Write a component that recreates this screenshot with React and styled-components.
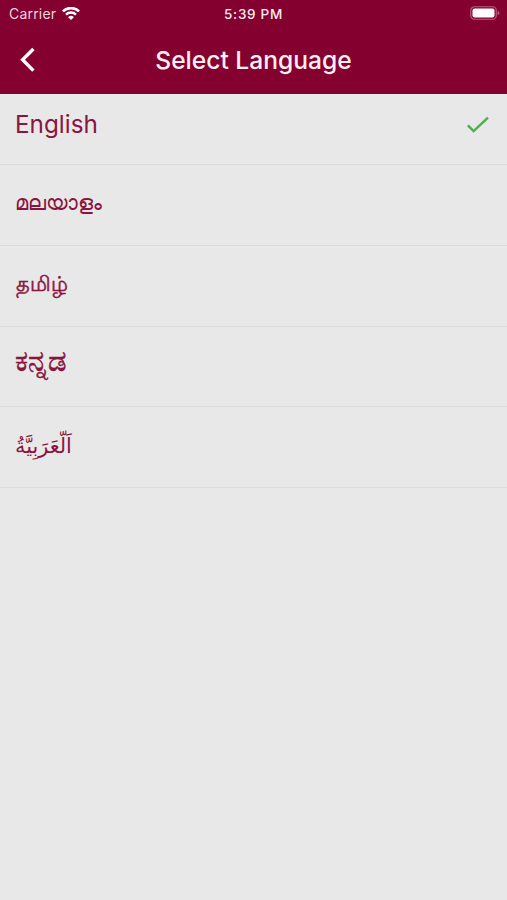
import styled, { createGlobalStyle } from "styled-components";

const GlobalStyle = createGlobalStyle`
  * {
    box-sizing: border-box;
  }
  body {
    margin: 0;
    background-color: #e8e8e8;
    font-family: Inter, "Noto Sans", sans-serif;
  }
`;

const Page = styled.div`
  width: 100%;
  min-height: 100vh;
`;

const Header = styled.header`
  background-color: #84002e;
  color: #fff;
  height: 94px;
`;

const StatusBar = styled.div`
  display: grid;
  grid-template-columns: 1fr auto 1fr;
  align-items: center;
  height: 27px;
  padding: 0 7px 0 9px;
  font-size: 14px;
`;

const Carrier = styled.div`
  display: flex;
  align-items: center;
  gap: 6px;
  color: #f0d5df;
  letter-spacing: 0.2px;
`;

const Time = styled.span`
  margin-right: 2px;
  font-size: 13.5px;
  font-weight: 500;
  letter-spacing: 0.7px;
  color: #fbeaf0;
`;

const Battery = styled.div`
  display: flex;
  justify-content: flex-end;
  margin-top: -1px;
`;

const TitleBar = styled.div`
  display: grid;
  grid-template-columns: 56px 1fr 56px;
  align-items: center;
  height: 65px;
`;

const BackButton = styled.button`
  display: flex;
  padding: 0 0 0 19px;
  border: none;
  background: none;
  color: #fff;
  cursor: pointer;
`;

const Title = styled.h1`
  margin: 0;
  font-size: 24.6px;
  font-weight: 500;
  text-align: center;
  color: #fdeef3;
`;

const List = styled.ul`
  list-style: none;
  margin: 0;
  padding: 0;
`;

const Row = styled.li`
  display: flex;
  align-items: center;
  justify-content: space-between;
  height: ${({ $height }) => $height || "80.75px"};
  padding: 0 17px ${({ $bottom }) => $bottom || "9px"}
    ${({ $left }) => $left || "15px"};
  border-bottom: 1px solid #dcdcdc;
  color: #8a1540;
`;

const Language = styled.span`
  font-family: ${({ $font }) => $font || "inherit"};
  font-size: ${({ $size }) => $size || "24.3px"};
  line-height: 1;
  -webkit-text-stroke: ${({ $stroke }) => $stroke || "0"} currentColor;
`;

const languages = [
  { code: "en", name: "English", height: "71px" },
  { code: "ml", name: "മലയാളം", size: "21.2px", bottom: "4px" },
  {
    code: "ta",
    name: "தமிழ்",
    size: "21.3px",
    bottom: "4px",
    left: "16px",
    stroke: "0.5px",
  },
  {
    code: "kn",
    name: "ಕನ್ನಡ",
    size: "29px",
    bottom: "12px",
    stroke: "0.5px",
  },
  {
    code: "ar",
    name: "اَلّعَرَبِيَّةُ",
    size: "20.8px",
    bottom: "2px",
    font: '"DejaVu Sans", sans-serif',
  },
];

function WifiIcon() {
  return (
    <svg width="18" height="14" viewBox="0 0 18 14" fill="none">
      <path d="M0.9 4.4a11.5 11.5 0 0 1 16.2 0" stroke="#fff" strokeWidth="2.7" />
      <path d="M4 7.6a7.1 7.1 0 0 1 10 0" stroke="#fff" strokeWidth="2.4" />
      <path d="M6.1 10.2a4.1 4.1 0 0 1 5.8 0L9 13.1z" fill="#fff" />
    </svg>
  );
}

function BatteryIcon() {
  return (
    <svg width="30" height="14" viewBox="0 0 30 14" fill="none">
      <rect x="0.75" y="0.75" width="25.5" height="12.5" rx="3.6" stroke="#b65f82" strokeWidth="1.2" />
      <rect x="2.5" y="2.5" width="22" height="9" rx="2" fill="#fff" />
      <path d="M27.6 4.8q2 .7 2 2.2t-2 2.2z" fill="#b65f82" />
    </svg>
  );
}

function BackIcon() {
  return (
    <svg width="17" height="26" viewBox="0 0 17 26" fill="none">
      <path d="M14.4 2 3.6 12.8l10.8 10.8" stroke="#fff" strokeWidth="3.4" />
    </svg>
  );
}

function CheckIcon() {
  return (
    <svg width="23" height="18" viewBox="0 0 23 18" fill="none">
      <path d="M0.8 9.4 6.6 15.2 21 1.6" stroke="#4caf50" strokeWidth="2.4" />
    </svg>
  );
}

function App() {
  return (
    <Page>
      <GlobalStyle />
      <Header>
        <StatusBar>
          <Carrier>
            Carrier
            <WifiIcon />
          </Carrier>
          <Time>5:39 PM</Time>
          <Battery>
            <BatteryIcon />
          </Battery>
        </StatusBar>
        <TitleBar>
          <BackButton aria-label="Back">
            <BackIcon />
          </BackButton>
          <Title>Select Language</Title>
        </TitleBar>
      </Header>
      <List>
        {languages.map((l) => (
          <Row key={l.code} $height={l.height} $bottom={l.bottom} $left={l.left}>
            <Language lang={l.code} $size={l.size} $stroke={l.stroke} $font={l.font}>
              {l.name}
            </Language>
            {l.code === "en" && <CheckIcon />}
          </Row>
        ))}
      </List>
    </Page>
  );
}

export default App;
